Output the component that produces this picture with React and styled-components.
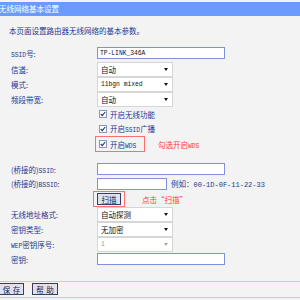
import React from "react";
import styled, { createGlobalStyle } from "styled-components";

const Global = createGlobalStyle`
  html, body { margin: 0; padding: 0; background: #f3f3f3; }
  body {
    font-family: "Noto Sans CJK SC", "Noto Sans", sans-serif;
    font-size: 7.5px;
    color: #1c3894;
  }
`;

const Page = styled.div`
  width: 300px;
  height: 300px;
  overflow: hidden;
  padding-top: 2px;
  box-sizing: border-box;
`;

const Header = styled.div`
  height: 14px;
  line-height: 14px;
  background: #6a9bff;
  color: #ffffff;
  text-indent: -1px;
  white-space: nowrap;
`;

const Desc = styled.div`
  height: 29px;
  display: flex;
  align-items: center;
  padding-left: 9px;
`;

const Form = styled.div`
  display: flex;
  flex-direction: column;
`;

const Row = styled.div`
  display: grid;
  grid-template-columns: 86px 1fr;
  align-items: center;
  padding-left: 11px;
  height: ${(p) => p.$h || 15}px;
  margin-top: ${(p) => p.$mt || 0}px;
`;

const Label = styled.div`
  white-space: nowrap;
`;

const Field = styled.div`
  display: flex;
  align-items: center;
  white-space: nowrap;
`;

const Lat = styled.span`
  font-family: "Liberation Mono", monospace;
  font-size: ${(p) => p.$fs || 6.3}px;
`;

const TextBox = styled.div`
  box-sizing: border-box;
  width: ${(p) => p.$w}px;
  height: 12px;
  background: #ffffff;
  border: 1px solid #7f93d6;
  padding-left: 2px;
  display: flex;
  align-items: center;
  color: #111;
`;

const Select = styled.div`
  position: relative;
  box-sizing: border-box;
  width: 76px;
  height: 15px;
  background: #ffffff;
  border: 1px solid #d6d6d6;
  padding-left: 3px;
  display: flex;
  align-items: center;
  color: ${(p) => (p.$disabled ? "#9a9a9a" : "#111")};
  &::after {
    content: "";
    position: absolute;
    right: 4px;
    top: 5px;
    border-left: 2.5px solid transparent;
    border-right: 2.5px solid transparent;
    border-top: 3px solid ${(p) => (p.$disabled ? "#a8a8a8" : "#111")};
  }
`;

const CheckItem = styled.div`
  display: inline-flex;
  align-items: center;
  gap: 3px;
  margin-left: ${(p) => p.$ml ?? 2}px;
`;

const Box = styled.span`
  box-sizing: border-box;
  width: 8px;
  height: 8px;
  background: #fff;
  border: 1px solid #8796c4;
  display: inline-flex;
  align-items: center;
  justify-content: center;
`;

const Highlight = styled.div`
  box-sizing: border-box;
  display: inline-flex;
  align-items: center;
  border: 1px solid #ff6f6f;
  margin-left: ${(p) => p.$ml}px;
  padding: 0 3px;
  width: ${(p) => p.$w}px;
  height: ${(p) => p.$h}px;
`;

const Note = styled.span`
  color: #ff3a3a;
  margin-left: ${(p) => p.$ml}px;
`;

const Hint = styled.span`
  margin-left: 4px;
`;

const Btn = styled.div`
  box-sizing: border-box;
  height: ${(p) => p.$h || 12}px;
  width: ${(p) => p.$w}px;
  margin-left: ${(p) => p.$ml || 0}px;
  border: 1px solid #3a3d5c;
  background: #dde2f3;
  color: #1a1f4a;
  display: flex;
  align-items: center;
  justify-content: center;
  word-spacing: 1px;
`;

const BottomBar = styled.div`
  margin-top: 15px;
  border-top: 1px solid #f7c387;
  border-bottom: 1px solid #f7c387;
  height: 17px;
  box-sizing: border-box;
  padding-top: 1px;
  display: flex;
  gap: 8px;
`;

const Check = ({ label }) => (
  <>
    <Box>
      <svg width="6" height="6" viewBox="0 0 6 6">
        <path d="M0.8 3 L2.3 4.6 L5.2 1" fill="none" stroke="#24306a" strokeWidth="1.1" />
      </svg>
    </Box>
    <span>{label}</span>
  </>
);

export default function App() {
  return (
    <Page>
      <Global />
      <Header>无线网络基本设置</Header>
      <Desc>本页面设置路由器无线网络的基本参数。</Desc>
      <Form>
        <Row $h={16}>
          <Label><Lat>SSID</Lat>号:</Label>
          <Field><TextBox $w={128}><Lat>TP-LINK_346A</Lat></TextBox></Field>
        </Row>
        <Row $mt={1}>
          <Label>信道:</Label>
          <Field><Select>自动</Select></Field>
        </Row>
        <Row>
          <Label>模式:</Label>
          <Field><Select><Lat>11bgn mixed</Lat></Select></Field>
        </Row>
        <Row>
          <Label>频段带宽:</Label>
          <Field><Select>自动</Select></Field>
        </Row>
        <Row $h={14}>
          <Label />
          <Field><CheckItem><Check label="开启无线功能" /></CheckItem></Field>
        </Row>
        <Row>
          <Label />
          <Field><CheckItem><Check label={<>开启<Lat>SSID</Lat>广播</>} /></CheckItem></Field>
        </Row>
        <Row $h={16}>
          <Label />
          <Field>
            <Highlight $ml={-2} $w={50} $h={16}>
              <CheckItem $ml={0}><Check label={<>开启<Lat>WDS</Lat></>} /></CheckItem>
            </Highlight>
            <Note $ml={13}>勾选开启<Lat>WDS</Lat></Note>
          </Field>
        </Row>
        <Row $h={14} $mt={10}>
          <Label>(桥接的)<Lat>SSID</Lat>:</Label>
          <Field><TextBox $w={128} /></Field>
        </Row>
        <Row $h={15}>
          <Label>(桥接的)<Lat>BSSID</Lat>:</Label>
          <Field>
            <TextBox $w={70} />
            <Hint>例如：<Lat $fs={7}>00-1D-0F-11-22-33</Lat></Hint>
          </Field>
        </Row>
        <Row $h={16}>
          <Label />
          <Field>
            <Highlight $ml={-4} $w={32} $h={16}>
              <Btn $w={24} $h={12}>扫描</Btn>
            </Highlight>
            <Note $ml={17}>点击“扫描”</Note>
          </Field>
        </Row>
        <Row>
          <Label>无线地址格式:</Label>
          <Field><Select>自动探测</Select></Field>
        </Row>
        <Row>
          <Label>密钥类型:</Label>
          <Field><Select>无加密</Select></Field>
        </Row>
        <Row>
          <Label><Lat>WEP</Lat>密钥序号:</Label>
          <Field><Select $disabled><Lat>1</Lat></Select></Field>
        </Row>
        <Row $h={14}>
          <Label>密钥:</Label>
          <Field><TextBox $w={128} /></Field>
        </Row>
      </Form>
      <BottomBar>
        <Btn $w={25} $h={12} $ml={-1}>保 存</Btn>
        <Btn $w={26} $h={12}>帮 助</Btn>
      </BottomBar>
    </Page>
  );
}
